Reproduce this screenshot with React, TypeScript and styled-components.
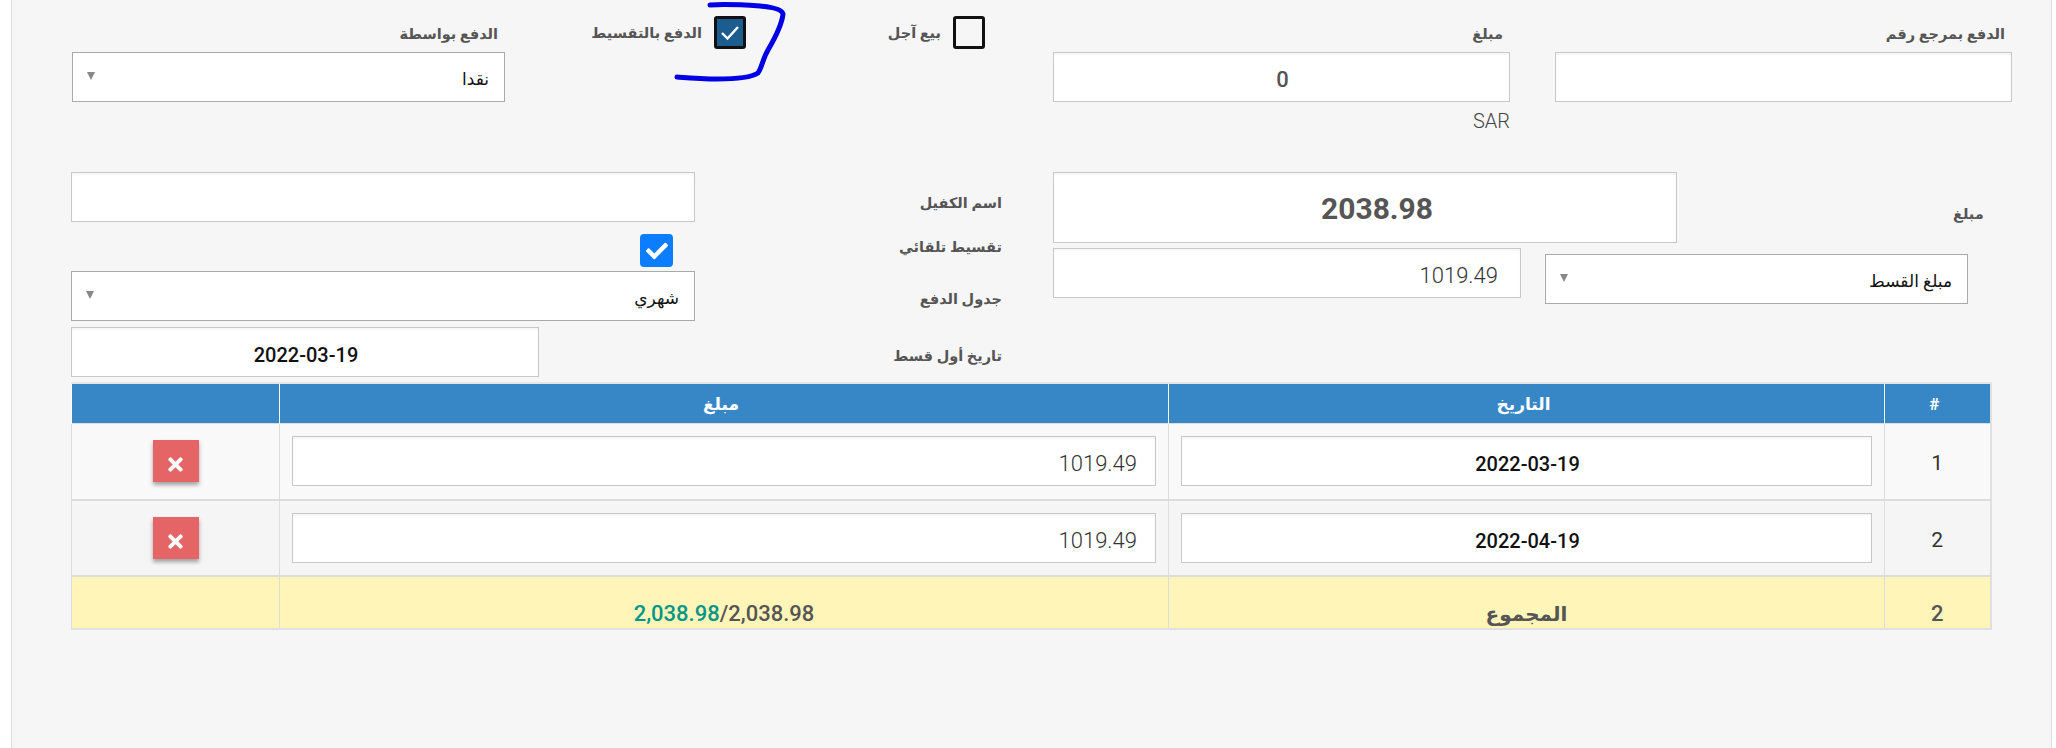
import styled, { createGlobalStyle } from "styled-components";
import { FC } from "react";
import { FaCheck, FaTimes } from "react-icons/fa";

const GlobalStyle = createGlobalStyle`
  html, body {
    margin: 0;
    padding: 0;
    background: #fff;
    font-family: Roboto, "DejaVu Sans", sans-serif;
  }
  * {
    box-sizing: border-box;
  }
`;

const Panel = styled.div`
  position: relative;
  width: 2041px;
  height: 748px;
  margin-left: 11px;
  padding: 16px 0 0 60px;
  background: #f6f6f6;
  border-left: 1px solid #ddd;
  border-right: 1px solid #ddd;
  overflow: hidden;
`;

const TopGrid = styled.div`
  display: grid;
  grid-template-columns: 433px 241px 239px 525px 502px;
  height: 156px;
`;

const Field = styled.div<{ $width?: number }>`
  width: ${(p) => (p.$width ? `${p.$width}px` : "100%")};
  justify-self: end;
`;

const FieldLabel = styled.div`
  height: 36px;
  padding: 10px 7px 0 0;
  direction: rtl;
  font-size: 14.5px;
  font-weight: 700;
  color: #555;
`;

const Input = styled.input<{
  $height?: number;
  $size?: number;
  $weight?: number;
  $align?: string;
  $color?: string;
  $shift?: number;
  $padRight?: number;
}>`
  display: block;
  width: 100%;
  height: ${(p) => p.$height || 50}px;
  padding: ${(p) => (p.$height ? 2 : 5)}px ${(p) => p.$padRight || 22}px 0 ${(p) => 24 + (p.$shift || 0)}px;
  border: 1px solid #c8c8c8;
  border-radius: 0;
  outline: none;
  background: #fff;
  box-shadow: inset 0 2px 2px rgba(0, 0, 0, 0.04);
  font-family: Roboto, "DejaVu Sans", sans-serif;
  font-size: ${(p) => p.$size || 22}px;
  font-weight: ${(p) => p.$weight || 300};
  text-align: ${(p) => p.$align || "right"};
  color: ${(p) => p.$color || "#333"};
`;

const SelectBox = styled.div`
  display: flex;
  align-items: center;
  justify-content: space-between;
  width: 100%;
  height: 50px;
  padding: 3px 15px 0 14px;
  background: #fff;
  border: 1px solid #aaa;
  font-size: 17px;
  color: #111;
`;

const Caret = styled.span`
  width: 0;
  height: 0;
  margin-top: -5px;
  border-left: 4px solid transparent;
  border-right: 4px solid transparent;
  border-top: 8px solid #888;
`;

const CheckField = styled.div`
  display: flex;
  justify-content: flex-end;
  gap: 12px;
  direction: ltr;
`;

const CheckLabel = styled.span`
  padding-top: 9px;
  direction: rtl;
  font-size: 14.5px;
  font-weight: 700;
  color: #555;
`;

const DarkCheck = styled.span<{ $checked?: boolean }>`
  display: flex;
  align-items: center;
  justify-content: center;
  width: 32px;
  height: 33px;
  border: 3px solid #111;
  border-radius: 3px;
  background: ${(p) => (p.$checked ? "#1c5d8f" : "transparent")};
`;

const BlueCheck = styled.span`
  display: flex;
  align-items: center;
  justify-content: center;
  width: 33px;
  height: 33px;
  margin-right: 22px;
  border-radius: 4px;
  background: #0d7dff;
  color: #fff;
  font-size: 22px;
`;

const SarNote = styled.div`
  margin-top: 7px;
  text-align: right;
  font-size: 20px;
  font-weight: 300;
  color: #444;
`;

const FormColumns = styled.div`
  display: grid;
  grid-template-columns: 982px 1fr;
  margin-left: -1px;
`;

const LeftForm = styled.div`
  display: grid;
  grid-template-columns: 624px 307px;
  grid-template-rows: 50px 45px 54px 56px;
  align-content: start;
`;

const RowLabel = styled.div<{ $top: number }>`
  padding-top: ${(p) => p.$top}px;
  text-align: right;
  direction: rtl;
  font-size: 14.5px;
  font-weight: 700;
  color: #555;
`;

const ControlSlot = styled.div<{ $mt?: number; $width?: number; $end?: boolean }>`
  display: flex;
  justify-content: ${(p) => (p.$end ? "flex-end" : "flex-start")};
  width: ${(p) => (p.$width ? `${p.$width}px` : "100%")};
  margin-top: ${(p) => p.$mt || 0}px;
`;

const RightForm = styled.div`
  display: flex;
  flex-direction: column;
  gap: 5px;
`;

const BigRow = styled.div`
  display: grid;
  grid-template-columns: 624px 1fr;
`;

const BigLabel = styled.div`
  padding: 34px 0 0 276px;
  direction: rtl;
  text-align: left;
  font-size: 14.5px;
  font-weight: 700;
  color: #555;
`;

const InstallmentRow = styled.div`
  display: grid;
  grid-template-columns: 468px 423px;
  column-gap: 24px;
`;

const SelectSlot = styled.div`
  padding-top: 6px;
`;

const Table = styled.table`
  width: 1919px;
  height: 248px;
  margin: 5px 0 0 -1px;
  border-collapse: collapse;
  table-layout: fixed;
  direction: rtl;
  border-top: 2px solid #e5e5e5;
  border-bottom: 2px solid #e0e0e0;
  border-right: 2px solid #e0e0e0;
  border-left: 1px solid #ddd;
`;

const Th = styled.th`
  height: 40px;
  padding: 2px 6px 0 0;
  background: #3787c7;
  border-left: 1px solid #fff;
  font-size: 17px;
  font-weight: 700;
  color: #fff;
`;

const Row = styled.tr<{ $bg: string }>`
  background: ${(p) => p.$bg};
`;

const Td = styled.td`
  height: 76px;
  padding: 0 12px;
  border: 1px solid #ddd;
  border-bottom: 2px solid #ddd;
  text-align: center;
  font-size: 21px;
  color: #333;
`;

const NumberTd = styled(Td)`
  padding-top: 4px;
`;

const TotalTd = styled.td`
  height: 52px;
  padding: 0 0 2px;
  vertical-align: bottom;
  border-left: 1px solid #ddd;
  text-align: center;
  font-size: 22px;
  font-weight: 500;
  color: #555;
`;

const TotalName = styled.span`
  font-size: 20px;
  font-weight: 700;
`;

const Paid = styled.span`
  color: #009688;
`;

const DeleteButton = styled.button`
  display: inline-flex;
  align-items: center;
  justify-content: center;
  vertical-align: middle;
  width: 46px;
  height: 42px;
  padding: 6px 0 0;
  border: none;
  background: #e56567;
  box-shadow: 0 3px 4px rgba(0, 0, 0, 0.35);
  color: #fff;
  font-size: 21px;
`;

const Scribble = styled.svg`
  position: absolute;
  left: -12px;
  top: 0;
  pointer-events: none;
`;

const rows = [
  { n: 1, date: "2022-03-19", amount: "1019.49", bg: "#f9f9f9" },
  { n: 2, date: "2022-04-19", amount: "1019.49", bg: "#f5f5f5" },
];

const App: FC = () => {
  return (
    <>
      <GlobalStyle />
      <Panel>
        <TopGrid>
          <Field>
            <FieldLabel>الدفع بواسطة</FieldLabel>
            <SelectBox>
              <Caret />
              <span>نقدا</span>
            </SelectBox>
          </Field>
          <CheckField>
            <CheckLabel>الدفع بالتقسيط</CheckLabel>
            <DarkCheck $checked>
              <svg width="20" height="16" viewBox="0 0 20 16">
                <path d="M2 8l5.5 5.5L18 2" fill="none" stroke="#fff" strokeWidth="2.4" />
              </svg>
            </DarkCheck>
          </CheckField>
          <CheckField>
            <CheckLabel>بيع آجل</CheckLabel>
            <DarkCheck />
          </CheckField>
          <Field $width={457}>
            <FieldLabel>مبلغ</FieldLabel>
            <Input readOnly value="0" $align="center" $weight={500} $color="#555" />
            <SarNote>SAR</SarNote>
          </Field>
          <Field $width={457}>
            <FieldLabel>الدفع بمرجع رقم</FieldLabel>
            <Input readOnly value="" />
          </Field>
        </TopGrid>

        <FormColumns>
          <LeftForm>
            <Input readOnly value="" />
            <RowLabel $top={23}>اسم الكفيل</RowLabel>
            <ControlSlot $mt={12} $end>
              <BlueCheck>
                <FaCheck />
              </BlueCheck>
            </ControlSlot>
            <RowLabel $top={17}>تقسيط تلقائي</RowLabel>
            <ControlSlot $mt={4}>
              <SelectBox>
                <Caret />
                <span>شهري</span>
              </SelectBox>
            </ControlSlot>
            <RowLabel $top={24}>جدول الدفع</RowLabel>
            <ControlSlot $mt={6} $width={468}>
              <Input readOnly value="2022-03-19" $align="center" $size={20} $weight={500} $color="#111" />
            </ControlSlot>
            <RowLabel $top={27}>تاريخ أول قسط</RowLabel>
          </LeftForm>
          <RightForm>
            <BigRow>
              <Input readOnly value="2038.98" $height={71} $size={30} $weight={700} $align="center" $color="#555" $shift={22} />
              <BigLabel>مبلغ</BigLabel>
            </BigRow>
            <InstallmentRow>
              <Input readOnly value="1019.49" />
              <SelectSlot>
                <SelectBox>
                  <Caret />
                  <span>مبلغ القسط</span>
                </SelectBox>
              </SelectSlot>
            </InstallmentRow>
          </RightForm>
        </FormColumns>

        <Table>
          <colgroup>
            <col width="106" />
            <col width="716" />
            <col width="889" />
            <col width="208" />
          </colgroup>
          <thead>
            <tr>
              <Th>#</Th>
              <Th>التاريخ</Th>
              <Th>مبلغ</Th>
              <Th />
            </tr>
          </thead>
          <tbody>
            {rows.map((row) => (
              <Row key={row.n} $bg={row.bg}>
                <NumberTd>{row.n}</NumberTd>
                <Td>
                  <Input readOnly value={row.date} $align="center" $size={20} $weight={500} $color="#111" />
                </Td>
                <Td>
                  <Input readOnly value={row.amount} $padRight={18} />
                </Td>
                <Td>
                  <DeleteButton>
                    <FaTimes />
                  </DeleteButton>
                </Td>
              </Row>
            ))}
            <Row $bg="#fff5b8">
              <TotalTd>2</TotalTd>
              <TotalTd>
                <TotalName>المجموع</TotalName>
              </TotalTd>
              <TotalTd dir="ltr">
                <Paid>2,038.98</Paid>/2,038.98
              </TotalTd>
              <TotalTd />
            </Row>
          </tbody>
        </Table>

        <Scribble width="800" height="90" viewBox="0 0 800 90">
          <path
            d="M710 5C725 4 745 5 760 6C772 7 782 9 783 14C782 24 775 38 768 50C762 60 762 68 758 73C752 77 738 79 717 79C702 79 690 78 677 77"
            fill="none"
            stroke="#0000e6"
            strokeWidth="5"
            strokeLinecap="round"
          />
        </Scribble>
      </Panel>
    </>
  );
};

export default App;
